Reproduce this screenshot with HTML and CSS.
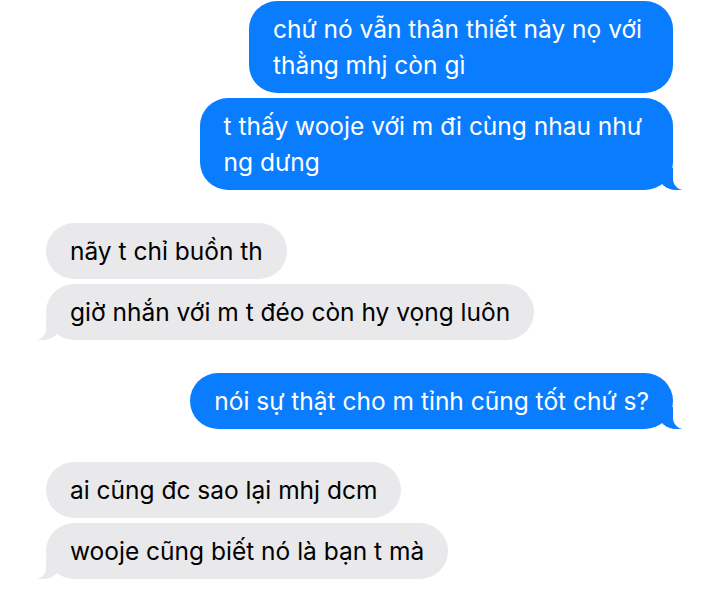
FILE: index.html
```html
<!DOCTYPE html>
<html lang="vi">
<head>
  <meta charset="UTF-8" />
  <meta name="viewport" content="width=device-width, initial-scale=1.0"/>
  <title>Tin nhắn</title>
  <link rel="stylesheet" href="styles.css">
</head>
<body>
  <div class="chat">
    <div class="group sent">
      <div class="bubble multi">chứ nó vẫn thân thiết này nọ với<br>thằng mhj còn gì</div>
      <div class="bubble multi tail">t thấy wooje với m đi cùng nhau như<br>ng dưng</div>
    </div>

    <div class="group received">
      <div class="bubble">nãy t chỉ buồn th</div>
      <div class="bubble tail">giờ nhắn với m t đéo còn hy vọng luôn</div>
    </div>

    <div class="group sent">
      <div class="bubble tail">nói sự thật cho m tỉnh cũng tốt chứ s?</div>
    </div>

    <div class="group received">
      <div class="bubble">ai cũng đc sao lại mhj dcm</div>
      <div class="bubble tail">wooje cũng biết nó là bạn t mà</div>
    </div>
  </div>
</body>
</html>
```

FILE: styles.css
```css
:root {
  --blue: #0a7dfe;
  --gray: #e9e9eb;
}

body {
  margin: 0;
  background: #fff;
  font-family: 'Inter', 'Roboto', sans-serif;
}
.chat {
  display: flex;
  flex-direction: column;
  gap: 33px;
  padding: 1px 47px 0 46px;
}
.group {
  display: flex;
  flex-direction: column;
  gap: 5px;
}
.group.sent {
  align-items: flex-end;
}
.group.received {
  align-items: flex-start;
}
.bubble {
  position: relative;
  padding: 10px 24px;
  border-radius: 28px;
  font-size: 24.5px;
  line-height: 36px;
  white-space: nowrap;
}
.bubble.multi {
  padding-right: 31px;
}
.sent .bubble {
  background: var(--blue);
  color: #fff;
}
.received .bubble {
  background: var(--gray);
  color: #000;
}

/* tails */
.bubble.tail::before,
.bubble.tail::after {
  content: "";
  position: absolute;
  bottom: 0;
  height: 22px;
}
.sent .bubble.tail::before {
  right: -9px;
  width: 24px;
  background: var(--blue);
  border-bottom-left-radius: 18px 16px;
}
.sent .bubble.tail::after {
  right: -26px;
  width: 26px;
  background: #fff;
  border-bottom-left-radius: 11px;
}
.received .bubble.tail::before {
  left: -9px;
  width: 24px;
  background: var(--gray);
  border-bottom-right-radius: 18px 16px;
}
.received .bubble.tail::after {
  left: -26px;
  width: 26px;
  background: #fff;
  border-bottom-right-radius: 11px;
}
```
